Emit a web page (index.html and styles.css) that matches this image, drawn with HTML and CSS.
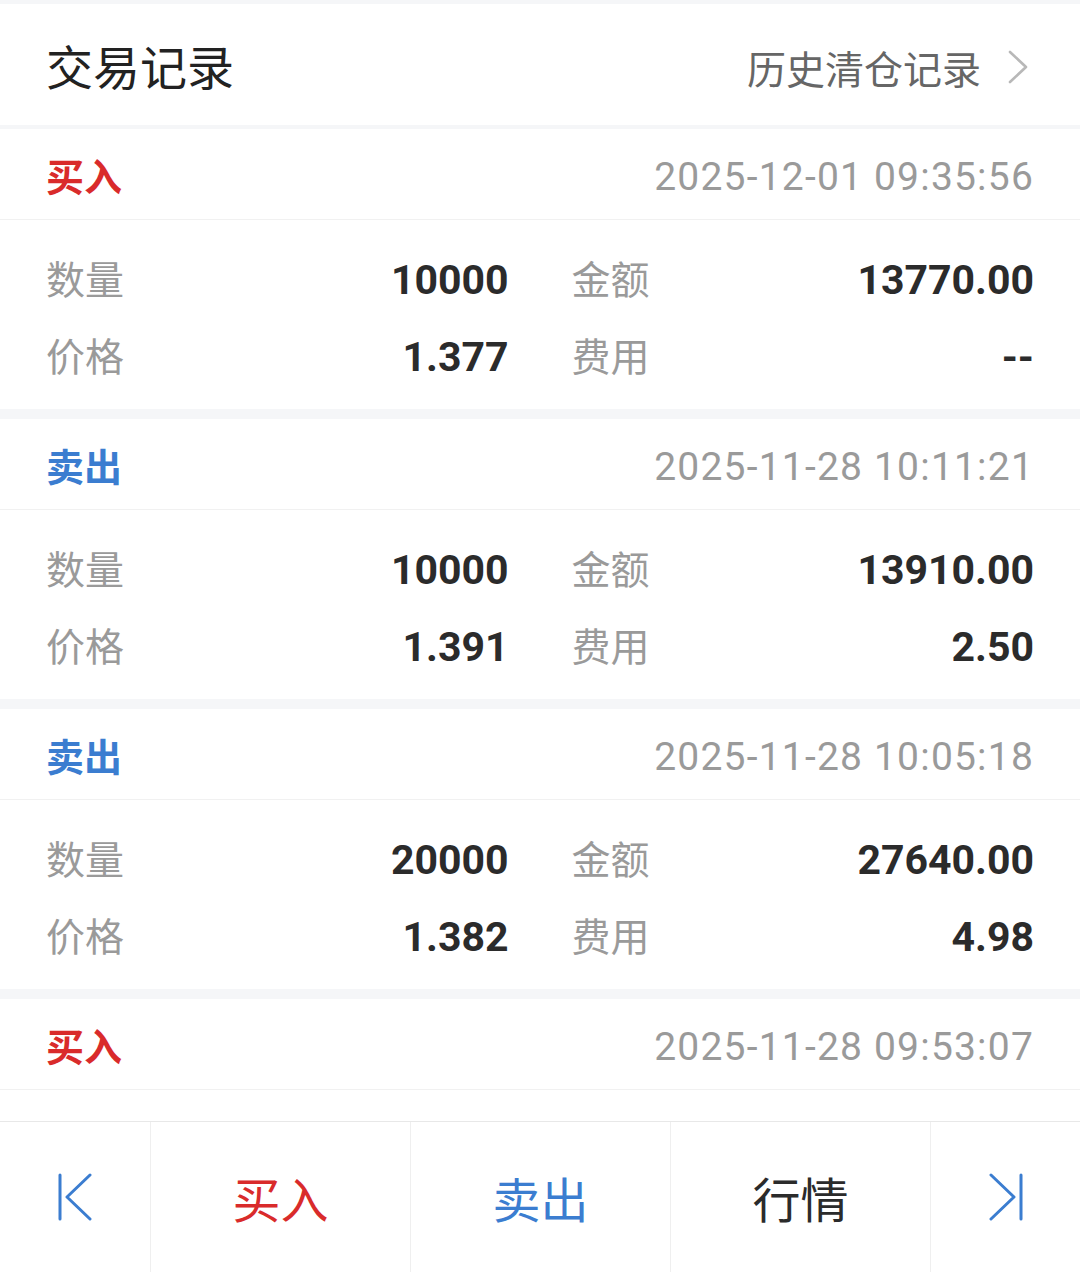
FILE: index.html
```html
<!DOCTYPE html>
<html lang="zh-CN">
<head>
    <meta charset="UTF-8" />
    <meta name="viewport" content="width=device-width, initial-scale=1.0"/>
    <title>交易记录</title>
    <link rel="stylesheet" href="styles.css">
</head>
<body>
<div class="page">
    <div class="list">
        <div class="topbar">
            <h1 class="title">交易记录</h1>
            <a class="history">历史清仓记录
                <svg class="arrow" width="20" height="34" viewBox="0 0 20 34"><path d="M2 2 L18 17 L2 32" fill="none" stroke="#b8b8b8" stroke-width="2.6" stroke-linecap="round" stroke-linejoin="round"/></svg>
            </a>
        </div>

        <div class="record">
            <div class="record-head">
                <span class="side buy">买入</span>
                <span class="time">2025-12-01 09:35:56</span>
            </div>
            <div class="record-body">
                <div class="field"><span class="label">数量</span><span class="value">10000</span></div>
                <div class="field"><span class="label">金额</span><span class="value">13770.00</span></div>
                <div class="field"><span class="label">价格</span><span class="value">1.377</span></div>
                <div class="field"><span class="label">费用</span><span class="value">--</span></div>
            </div>
        </div>

        <div class="record">
            <div class="record-head">
                <span class="side sell">卖出</span>
                <span class="time">2025-11-28 10:11:21</span>
            </div>
            <div class="record-body">
                <div class="field"><span class="label">数量</span><span class="value">10000</span></div>
                <div class="field"><span class="label">金额</span><span class="value">13910.00</span></div>
                <div class="field"><span class="label">价格</span><span class="value">1.391</span></div>
                <div class="field"><span class="label">费用</span><span class="value">2.50</span></div>
            </div>
        </div>

        <div class="record">
            <div class="record-head">
                <span class="side sell">卖出</span>
                <span class="time">2025-11-28 10:05:18</span>
            </div>
            <div class="record-body">
                <div class="field"><span class="label">数量</span><span class="value">20000</span></div>
                <div class="field"><span class="label">金额</span><span class="value">27640.00</span></div>
                <div class="field"><span class="label">价格</span><span class="value">1.382</span></div>
                <div class="field"><span class="label">费用</span><span class="value">4.98</span></div>
            </div>
        </div>

        <div class="record">
            <div class="record-head">
                <span class="side buy">买入</span>
                <span class="time">2025-11-28 09:53:07</span>
            </div>
            <div class="record-body empty"></div>
        </div>
    </div>

    <nav class="toolbar">
        <a class="tool">
            <svg width="36" height="48" viewBox="0 0 36 48"><path d="M3 2 V46 M33 2 L10 24 L33 46" fill="none" stroke="#3b7dd0" stroke-width="3" stroke-linecap="round" stroke-linejoin="round"/></svg>
        </a>
        <a class="tool buy">买入</a>
        <a class="tool sell">卖出</a>
        <a class="tool">行情</a>
        <a class="tool">
            <svg width="36" height="48" viewBox="0 0 36 48"><path d="M33 2 V46 M3 2 L26 24 L3 46" fill="none" stroke="#3b7dd0" stroke-width="3" stroke-linecap="round" stroke-linejoin="round"/></svg>
        </a>
    </nav>
</div>
</body>
</html>
```

FILE: styles.css
```css
body {
    margin: 0;
    background: #f5f6f8;
    font-family: "Noto Sans CJK SC", "Noto Sans", sans-serif;
    color: #222;
}
.page {
    height: 1272px;
    display: flex;
    flex-direction: column;
}
.list {
    flex: 1;
    overflow: hidden;
    padding-top: 4px;
}
.topbar {
    height: 121px;
    background: white;
    display: flex;
    align-items: center;
    justify-content: space-between;
    padding: 0 52px 0 46px;
    margin-bottom: 4px;
}
.title {
    margin: 0;
    font-size: 47px;
    font-weight: normal;
    color: #222;
}
.history {
    display: flex;
    align-items: center;
    gap: 27px;
    font-size: 39px;
    color: #666;
    padding-top: 4px;
}
.record {
    background: white;
}
.record + .record {
    margin-top: 10px;
}
.record-head {
    height: 90px;
    display: flex;
    align-items: center;
    justify-content: space-between;
    padding: 0 46px;
    border-bottom: 1px solid #f1f1f1;
}
.side {
    font-size: 38px;
    font-weight: bold;
}
.buy {
    color: #d92b2b;
}
.sell {
    color: #3b7dd0;
}
.time {
    font-family: Roboto, sans-serif;
    font-size: 39px;
    letter-spacing: 1.2px;
    color: #9a9a9a;
    padding-top: 6px;
}
.record-body {
    display: grid;
    grid-template-columns: 1fr 1fr;
    column-gap: 63px;
    padding: 19px 46px 16px;
}
.record-body.empty {
    height: 190px;
    box-sizing: border-box;
}
.field {
    height: 77px;
    line-height: 77px;
    display: flex;
    align-items: baseline;
    justify-content: space-between;
}
.label {
    font-size: 39px;
    color: #9a9a9a;
}
.value {
    font-family: Roboto, sans-serif;
    font-size: 41px;
    font-weight: bold;
    color: #2b2b2b;
}
.toolbar {
    height: 150px;
    flex-shrink: 0;
    background: white;
    border-top: 1px solid #e8e8e8;
    display: grid;
    grid-template-columns: 150px 260px 260px 260px 150px;
}
.tool {
    display: flex;
    align-items: center;
    justify-content: center;
    font-size: 48px;
    color: #2b2b2b;
}
.tool + .tool {
    border-left: 1px solid #efefef;
}
.tool.buy {
    color: #d92b2b;
}
.tool.sell {
    color: #3b7dd0;
}
```
